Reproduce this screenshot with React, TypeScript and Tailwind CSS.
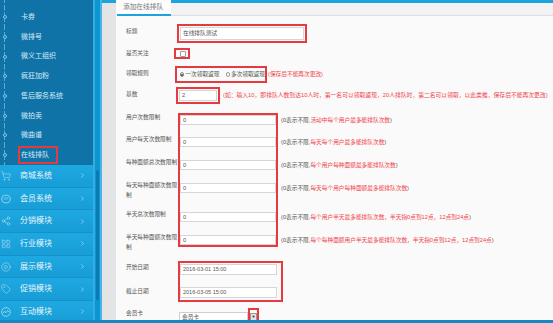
import { ShoppingCart, Share2, LayoutGrid, CirclePlay, Tag, ChevronRight } from "lucide-react";
import type { ReactNode } from "react";

const subItems = ["卡券", "微排号", "微义工组织", "疯狂加粉", "售后服务系统", "微拍卖", "微曲谱", "在线排队"];

function VipIcon() {
    return (
        <svg viewBox="0 0 12 12" className="h-[10px] w-[10px]" fill="none" stroke="currentColor" strokeWidth={1}>
            <ellipse cx="6" cy="6" rx="5.2" ry="4.6" />
            <text x="6" y="7.4" fontSize="3.6" textAnchor="middle" fill="currentColor" stroke="none" fontFamily="Liberation Sans, sans-serif">VIP</text>
        </svg>
    );
}

function PulseIcon() {
    return (
        <svg viewBox="0 0 12 12" className="h-[10px] w-[10px]" fill="none" stroke="currentColor" strokeWidth={1}>
            <circle cx="6" cy="6" r="5.2" />
            <polyline points="2.4,7.4 4.2,5 6,7 7.8,4.2 9.6,6" />
        </svg>
    );
}

const mainItems: { label: string; icon: ReactNode }[] = [
    { label: "商城系统", icon: <ShoppingCart className="h-[10px] w-[10px]" strokeWidth={1.5} /> },
    { label: "会员系统", icon: <VipIcon /> },
    { label: "分销模块", icon: <Share2 className="h-[10px] w-[10px]" strokeWidth={1.5} /> },
    { label: "行业模块", icon: <LayoutGrid className="h-[10px] w-[10px]" strokeWidth={1.5} /> },
    { label: "展示模块", icon: <CirclePlay className="h-[10px] w-[10px]" strokeWidth={1.5} /> },
    { label: "促销模块", icon: <Tag className="h-[10px] w-[10px]" strokeWidth={1.5} /> },
    { label: "互动模块", icon: <PulseIcon /> },
];

const limits = [
    { label: ["用户次数限制"], h: "h-[22px]", red: "活动中每个用户最多能排队次数" },
    { label: ["用户每天次数限制"], h: "h-[23px]", red: "每天每个用户最多能排队次数" },
    { label: ["每种面额总次数限制"], h: "h-[23px]", red: "每个用户每种面额最多能排队次数" },
    { label: ["每天每种面额次数限", "制"], h: "h-[29px]", red: "每天每个用户每种面额最多能排队次数" },
    { label: ["半天总次数限制"], h: "h-[23px]", red: "每个用户半天最多能排队次数，半天指0点到12点，12点到24点" },
    { label: ["半天每种面额次数限", "制"], h: "h-[10px]", red: "每个每种面额用户半天最多能排队次数，半天指0点到12点，12点到24点" },
];

function SubItem({ label, active }: { label: string; active: boolean }) {
    return (
        <div className="flex h-[19.7px] items-center">
            <div className="flex h-full w-[9px] flex-col items-center">
                <div className="flex-1 border-l border-dashed border-[#5ea9d3]" />
                <div className="h-[4px] w-[4px] rounded-full border border-[#8cc4e4]" />
                <div className="flex-1 border-l border-dashed border-[#5ea9d3]" />
            </div>
            {active ? (
                <span className="ml-[9px] border-2 border-[#e53a40] pl-[1px] pr-[7px] leading-[14px]">{label}</span>
            ) : (
                <span className="ml-[12px]">{label}</span>
            )}
        </div>
    );
}

export default function App() {
    return (
        <div className="flex h-[323px] w-[553px] flex-col overflow-hidden font-['Liberation_Sans','Noto_Sans_CJK_SC',sans-serif]">
            <div className="flex h-[320px] overflow-hidden">
                {/* Sidebar */}
                <aside className="flex w-[93px] flex-col">
                    <div className="h-[165px] bg-[#0f73a8] text-[7px] text-[#d6ebf7]">
                        <div className="ml-[4px] h-[7.5px] border-l border-dashed border-[#5ea9d3]" />
                        {subItems.map((s) => (
                            <SubItem key={s} label={s} active={s === "在线排队"} />
                        ))}
                    </div>
                    {mainItems.map((m) => (
                        <div
                            key={m.label}
                            className="flex h-[22.7px] shrink-0 items-center border-b border-[#1590c8] bg-gradient-to-b from-[#1ea8e1] to-[#189dd6] pl-[1px] pr-[7px] text-[8px] text-[#eaf6fc]"
                        >
                            <span className="text-[#a6dbf2]">{m.icon}</span>
                            <span className="ml-[9px]">{m.label}</span>
                            <ChevronRight className="ml-auto h-[7px] w-[7px] text-[#cdeaf7]" strokeWidth={2} />
                        </div>
                    ))}
                </aside>

                {/* Scroll strip */}
                <div className="w-[2px] bg-[#34ade3]" />
                <div className="flex w-[5px] flex-col items-center bg-[#0b96d1] pt-[170px]">
                    <div className="h-[130px] w-[3px] rounded-full bg-[#0c79b1]" />
                </div>
                <div className="w-[2px] bg-[#45b6e8]" />
                <div className="flex w-[14px] flex-col">
                    <div className="h-[3px] bg-[#1ba3dc]" />
                    <div className="flex-1 bg-[#e4e4e4]" />
                </div>

                {/* Main */}
                <main className="flex flex-1 flex-col bg-[#fafafa] text-[5.7px] text-[#555]">
                    <div className="flex h-[16px] shrink-0">
                        <div className="ml-[1px] flex w-[54px] items-center border-b-2 border-[#1ba3dc] bg-[#fdfdfd] pl-[6px] text-[6.7px] text-[#777]">
                            添加在线排队
                        </div>
                        <div className="flex flex-1 flex-col border-b border-[#dedede]">
                            <div className="h-[3px] bg-[#1ba3dc]" />
                            <div className="flex-1 bg-[#f2f2f2]" />
                        </div>
                    </div>

                    <div className="flex flex-col pl-[10px] pt-[8px]">
                        {/* 标题 */}
                        <div className="flex items-center">
                            <div className="mb-[4px] w-[51px]">标题</div>
                            <div className="border-2 border-[#e53a40] px-[1px] pb-[1px] pt-[1px]">
                                <div className="h-[13px] w-[124px] border border-[#d6d6d6] bg-white pl-[2px] leading-[11px]">在线排队测试</div>
                            </div>
                        </div>

                        {/* 是否关注 */}
                        <div className="mt-[5px] flex items-center">
                            <div className="w-[48px]">是否关注</div>
                            <div className="border-2 border-[#e53a40]">
                                <div className="flex h-[7px] w-[12px] items-center pl-[4px]">
                                    <div className="h-[6px] w-[6px] rounded-[1px] border border-[#9a9a9a] bg-white" />
                                </div>
                            </div>
                        </div>

                        {/* 领取规则 */}
                        <div className="mt-[7px] flex items-center whitespace-nowrap">
                            <div className="mb-[2px] w-[49px]">领取规则</div>
                            <div className="flex h-[17px] w-[92px] items-center border-2 border-[#e53a40] pl-[3px]">
                                <div className="flex h-[5px] w-[5px] items-center justify-center rounded-full border border-[#888] bg-white">
                                    <div className="h-[2px] w-[2px] rounded-full bg-[#444]" />
                                </div>
                                <span className="ml-[1px]">一次领取返现</span>
                                <div className="ml-[6px] h-[5px] w-[5px] rounded-full border border-[#999] bg-white" />
                                <span className="ml-[1px]">多次领取返现</span>
                            </div>
                            <span className="ml-[1px] mb-[1px] text-[#f0434b]">(保存后不能再次更改)</span>
                        </div>

                        {/* 基数 */}
                        <div className="mt-[4px] flex items-center whitespace-nowrap">
                            <div className="mb-[3px] w-[50px]">基数</div>
                            <div className="border-2 border-[#e53a40] p-[1px]">
                                <div className="h-[11px] w-[38px] border border-[#d6d6d6] bg-white pl-[2px] leading-[9px]">2</div>
                            </div>
                            <span className="ml-[3px] text-[5.8px] text-[#f0434b]">
                                (如：输入10，即排队人数到达10人时，第一名可以领取返现，20人排队时，第二名可以领取，以此类推，保存后不能再次更改)
                            </span>
                        </div>

                        {/* 次数限制 */}
                        <div className="mt-[9px] flex items-start whitespace-nowrap">
                            <div className="-mt-[1px] flex w-[52px] flex-col">
                                {limits.map((l, i) => (
                                    <div key={i} className={`${l.h} leading-[10px]`}>
                                        {l.label.map((t) => (
                                            <div key={t}>{t}</div>
                                        ))}
                                    </div>
                                ))}
                            </div>
                            <div className="flex w-[100px] flex-col border-2 border-[#e53a40]">
                                {limits.map((l, i) => (
                                    <div key={i} className={l.h}>
                                        <div className="h-[10px] w-[96px] border border-[#d6d6d6] bg-white pl-[2px] leading-[8px]">0</div>
                                    </div>
                                ))}
                            </div>
                            <div className="ml-[3px] flex flex-col pt-[2px]">
                                {limits.map((l, i) => (
                                    <div key={i} className={`${l.h} leading-[10px]`}>
                                        (0表示不限,<span className="text-[#f0434b]">{l.red}</span>)
                                    </div>
                                ))}
                            </div>
                        </div>

                        {/* 日期 */}
                        <div className="mt-[14px] flex items-start">
                            <div className="flex w-[52px] flex-col pt-[1px] leading-[10px]">
                                <div>开始日期</div>
                                <div className="mt-[14px]">截止日期</div>
                            </div>
                            <div className="flex flex-col border-2 border-[#e53a40] pb-[2px] pr-[4px] pt-[1px] text-[5.5px]">
                                <div className="h-[11px] w-[97px] border border-[#d6d6d6] bg-white pl-[2px] leading-[9px]">2016-03-01 15:00</div>
                                <div className="mt-[12px] h-[11px] w-[97px] border border-[#d6d6d6] bg-white pl-[2px] leading-[9px]">2016-03-05 15:00</div>
                            </div>
                        </div>

                        {/* 会员卡 */}
                        <div className="mt-[4px] flex items-start">
                            <div className="mt-[2px] w-[53px] leading-[10px]">会员卡</div>
                            <div className="mt-[6px] h-[10px] w-[69px] border border-[#cfcfcf] bg-white pl-[2px] leading-[8px]">会员卡</div>
                            <div className="mt-[2px] border-2 border-[#e53a40] pt-[3px]">
                                <div className="flex h-[8px] w-[7px] items-center justify-center border border-[#9a9a9a] bg-[#e2e2e2] text-[4px] leading-none text-[#222]">
                                    ▼
                                </div>
                                <div className="h-[1px]" />
                            </div>
                        </div>
                    </div>
                </main>
            </div>
            <div className="h-[3px] bg-[#1489c4]" />
        </div>
    );
}
